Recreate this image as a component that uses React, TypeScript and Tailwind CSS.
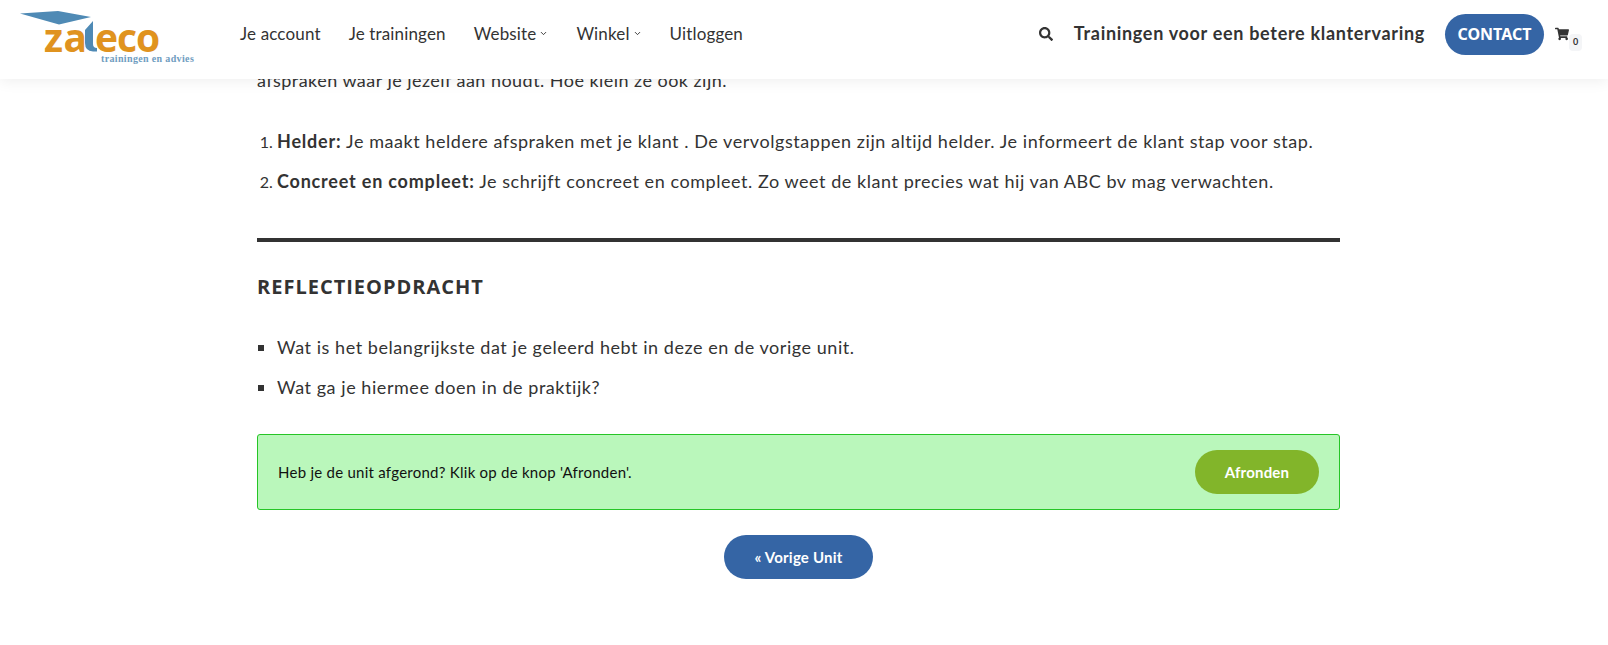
import { ChevronDown } from 'lucide-react'
import { FaSearch, FaShoppingCart } from 'react-icons/fa'

const navItems = [
  { label: 'Je account' },
  { label: 'Je trainingen' },
  { label: 'Website', caret: true },
  { label: 'Winkel', caret: true },
  { label: 'Uitloggen' },
]

function Logo() {
  return (
    <div className="relative w-[219px] h-[62px] shrink-0">
      <svg width="219" height="62" viewBox="0 0 219 62" className="absolute left-0 top-0">
        <path d="M20 10.5 L58 8 L91 14 L59 21.5 Z" fill="#4f8ab5" />
        <path d="M85 27 L93 18 L93 41 Q93 45 97 45 L97 48.5 L93 48.5 Q85 48 85 40 Z" fill="#4f8ab5" />
      </svg>
      <span className="absolute left-[44px] top-[17px] text-[39px] leading-[34px] font-bold text-[#e0931f] font-['Open_Sans',sans-serif] tracking-[0.5px]">
        za
      </span>
      <span className="absolute left-[95px] top-[17px] text-[39px] leading-[34px] font-bold text-[#e0931f] font-['Open_Sans',sans-serif] tracking-[-1px]">
        eco
      </span>
      <span className="absolute left-[101px] top-[51px] text-[10px] leading-[10px] font-bold text-[#6f9dbf] font-['Liberation_Serif',serif] tracking-[0.35px] whitespace-nowrap">
        trainingen en advies
      </span>
    </div>
  )
}

function Header() {
  return (
    <header className="absolute left-0 top-0 w-full h-[79px] bg-white shadow-[0_2px_14px_rgba(0,0,0,0.07)] flex items-center pr-[39px] pb-[12px] text-[#333]">
      <Logo />
      <nav className="flex items-center gap-[28px] ml-[21px] text-[17px] tracking-[0.15px]">
        {navItems.map((item) => (
          <a key={item.label} className="flex items-center gap-[3px] whitespace-nowrap">
            {item.label}
            {item.caret && <ChevronDown size={9} strokeWidth={2.5} />}
          </a>
        ))}
      </nav>
      <div className="ml-auto flex items-center">
        <FaSearch size={14} className="mr-[1px]" />
        <span className="ml-[20px] text-[18px] font-bold tracking-[0.69px] whitespace-nowrap">Trainingen voor een betere klantervaring</span>
        <a className="ml-[20px] mt-[1px] w-[99px] h-[41px] rounded-full bg-[#3565a5] text-white text-[16px] font-bold flex items-center justify-center font-['Noto_Sans',sans-serif]">
          CONTACT
        </a>
        <span className="relative ml-[11px] w-[14px]">
          <FaShoppingCart size={14} />
          <span className="absolute left-[14px] top-[7px] w-[13px] h-[17px] rounded bg-[#f4f5f7] text-[9px] font-bold flex items-center justify-center">0</span>
        </span>
      </div>
    </header>
  )
}

export default function App() {
  return (
    <div className="relative h-[645px] overflow-hidden bg-white text-[#333] font-['Lato',sans-serif]">
      <Header />
      <main className="w-[1083px] ml-[257px] pt-[68px] text-[18px] leading-[25px] tracking-[0.55px]">
        <p className="tracking-[0.46px]">afspraken waar je jezelf aan houdt. Hoe klein ze ook zijn.</p>
        <ol className="list-decimal pl-[20px] mt-[36px] flex flex-col gap-[15px] marker:text-[16px] marker:tracking-normal">
          <li>
            <strong className="tracking-[0.8px]">Helder:</strong> Je maakt heldere afspraken met je klant . De vervolgstappen zijn altijd helder. Je informeert de klant stap voor stap.
          </li>
          <li>
            <strong className="tracking-[0.8px]">Concreet en compleet:</strong> Je schrijft concreet en compleet. Zo weet de klant precies wat hij van ABC bv mag verwachten.
          </li>
        </ol>
        <hr className="mt-[44px] border-0 h-[4px] bg-[#333]" />
        <h3 className="mt-[33px] text-[20px] leading-[24px] font-bold tracking-[1px] font-['Open_Sans',sans-serif]">REFLECTIEOPDRACHT</h3>
        <ul className="list-[square] pl-[20px] mt-[36px] flex flex-col gap-[15px]">
          <li>Wat is het belangrijkste dat je geleerd hebt in deze en de vorige unit.</li>
          <li>Wat ga je hiermee doen in de praktijk?</li>
        </ul>
        <div className="mt-[34px] h-[76px] rounded-[3px] border border-[#26c526] bg-[#baf7bb] flex items-center justify-between pl-[20px] pr-[20px] tracking-normal">
          <span className="text-[15px] tracking-[0.25px] text-[#111]">Heb je de unit afgerond? Klik op de knop 'Afronden'.</span>
          <button className="w-[124px] h-[44px] rounded-full bg-[#82b52a] text-white text-[15px] font-bold tracking-[0.2px]">Afronden</button>
        </div>
        <div className="mt-[25px] flex justify-center tracking-normal">
          <button className="w-[149px] h-[44px] rounded-full bg-[#3565a5] text-white text-[15px] font-bold tracking-[0.2px]">« Vorige Unit</button>
        </div>
      </main>
    </div>
  )
}
